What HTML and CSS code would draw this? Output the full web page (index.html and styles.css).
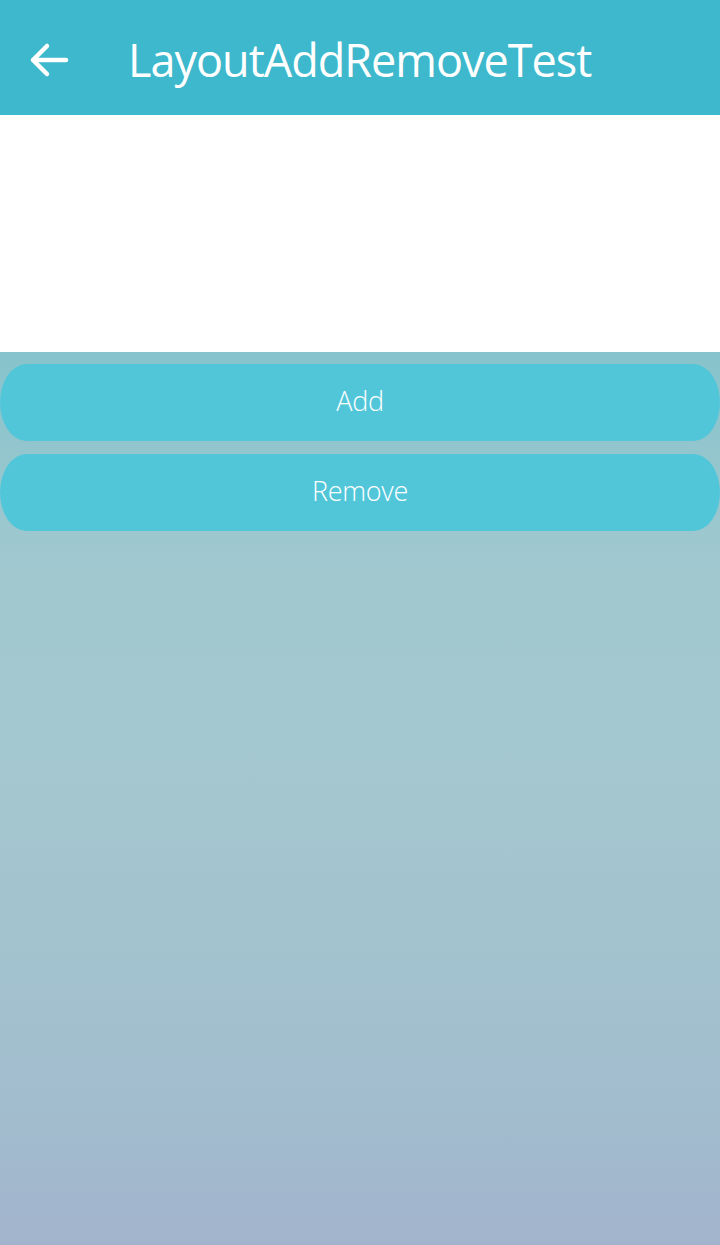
FILE: index.html
```html
<!DOCTYPE html>
<html>
<head>
<meta charset="utf-8">
<link rel="stylesheet" href="styles.css">
</head>
<body>
<div class="app">
  <header class="bar">
    <div class="back">
      <svg width="42" height="40" viewBox="0 0 42 40"><path d="M38 20H5M19 6L5 20L19 34" fill="none" stroke="#fff" stroke-width="4.5" stroke-linecap="round" stroke-linejoin="round"/></svg>
    </div>
    <h1 class="title">LayoutAddRemoveTest</h1>
  </header>
  <div class="blank"></div>
  <main class="content">
    <button class="btn">Add</button>
    <button class="btn">Remove</button>
  </main>
</div>
</body>
</html>
```
FILE: styles.css
```css
html, body { margin: 0; padding: 0; }
body { width: 720px; height: 1245px; overflow: hidden; font-family: "Open Sans", "Noto Sans", sans-serif; }
.app { display: flex; flex-direction: column; height: 1245px; }
.bar { height: 115px; background: #3db8cc; display: flex; align-items: center; flex: none; }
.back { width: 42px; height: 40px; margin-left: 28px; margin-right: 58px; margin-top: 4px; display: flex; }
.title { margin: 0; color: #fff; font-weight: 400; font-size: 45px; letter-spacing: -1px; padding-top: 4px; }
.blank { height: 237px; background: #fff; flex: none; }
.content { flex: 1; background: linear-gradient(to bottom, #87c3cc 0px, #a1c8cf 220px, #a4c7cf 450px, #a2bdce 750px, #a2b4cc 893px); padding-top: 12px; display: flex; flex-direction: column; gap: 13px; }
.btn { height: 77px; border: none; background: #52c6d9; color: #fff; border-radius: 27px / 39px; font-family: inherit; font-size: 27px; font-weight: 300; letter-spacing: -0.3px; width: 720px; padding: 0 0 5px; }
```
